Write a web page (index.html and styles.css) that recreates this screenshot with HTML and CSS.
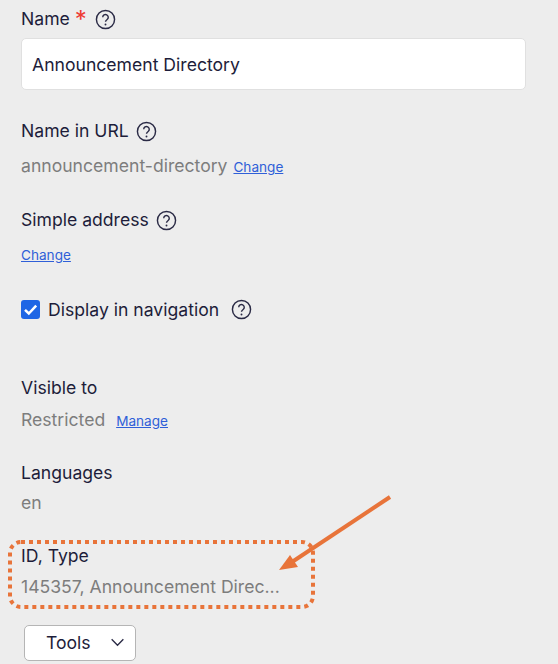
FILE: index.html
```html
<!DOCTYPE html>
<html lang="en">
<head>
    <meta charset="UTF-8" />
    <title>Page settings</title>
    <link rel="stylesheet" href="styles.css">
</head>
<body>

<div class="settings-form">
    <div class="field field-name">
        <div class="field-label">
            Name <span class="required">*</span>
            <svg class="help-icon" viewBox="0 0 22 22"><circle cx="11" cy="11" r="9.5"/><path d="M8.1 8.7a2.9 2.9 0 1 1 4.6 2.3c-1 .7-1.7 1.2-1.7 2.4"/><circle class="help-dot" cx="11" cy="16.2" r="1"/></svg>
        </div>
        <input class="text-input" type="text" value="Announcement Directory">
    </div>

    <div class="field field-url">
        <div class="field-label">
            Name in URL
            <svg class="help-icon" viewBox="0 0 22 22"><circle cx="11" cy="11" r="9.5"/><path d="M8.1 8.7a2.9 2.9 0 1 1 4.6 2.3c-1 .7-1.7 1.2-1.7 2.4"/><circle class="help-dot" cx="11" cy="16.2" r="1"/></svg>
        </div>
        <div class="field-value">announcement-directory <a class="small-link" href="#">Change</a></div>
    </div>

    <div class="field field-address">
        <div class="field-label">
            Simple address
            <svg class="help-icon" viewBox="0 0 22 22"><circle cx="11" cy="11" r="9.5"/><path d="M8.1 8.7a2.9 2.9 0 1 1 4.6 2.3c-1 .7-1.7 1.2-1.7 2.4"/><circle class="help-dot" cx="11" cy="16.2" r="1"/></svg>
        </div>
        <div class="field-value"><a class="small-link flush" href="#">Change</a></div>
    </div>

    <div class="check-row">
        <span class="checkbox">
            <svg viewBox="0 0 18 18"><path d="M3.8 9.3l3.6 3.5 7-7.4"/></svg>
        </span>
        <span class="check-label">Display in navigation</span>
        <svg class="help-icon" viewBox="0 0 22 22"><circle cx="11" cy="11" r="9.5"/><path d="M8.1 8.7a2.9 2.9 0 1 1 4.6 2.3c-1 .7-1.7 1.2-1.7 2.4"/><circle class="help-dot" cx="11" cy="16.2" r="1"/></svg>
    </div>

    <div class="field field-visible">
        <div class="field-label">Visible to</div>
        <div class="field-value">Restricted <a class="small-link wide" href="#">Manage</a></div>
    </div>

    <div class="field field-languages">
        <div class="field-label">Languages</div>
        <div class="field-value">en</div>
    </div>

    <div class="field field-id">
        <div class="field-label">ID, Type</div>
        <div class="field-value">145357, Announcement Direc...</div>
    </div>

    <button class="tools-button" type="button">
        Tools
        <svg viewBox="0 0 16 10"><path d="M1.5 1.5L8 8l6.5-6.5"/></svg>
    </button>
</div>

<!-- callout drawn on top of the screenshot -->
<svg class="callout" viewBox="0 0 558 664">
    <rect class="callout-box" x="10" y="542" width="303" height="65" rx="11"/>
    <path class="callout-line" d="M390 497L292 562"/>
    <path class="callout-head" d="M279 570L290 555L298 567Z"/>
</svg>

</body>
</html>
```

FILE: styles.css
```css
body {
    font-family: Inter, "Noto Sans", sans-serif;
    margin: 0;
    padding: 0;
    background: #ededed;
    color: #1d1d3a;
    width: 558px;
    height: 664px;
    overflow: hidden;
    position: relative;
}

.settings-form {
    padding: 8px 32px 0 21px;
}

.field-label {
    display: flex;
    align-items: center;
    gap: 7px;
    font-size: 17.6px;
    line-height: 22px;
    height: 22px;
}

.required {
    color: #ee3a33;
    font-size: 24px;
    line-height: 22px;
    margin-top: 2px;
    margin-left: -2px;
    margin-right: 1px;
}

.help-icon {
    width: 21px;
    height: 21px;
    fill: none;
    stroke: #2a2a45;
    stroke-width: 1.5;
}

.help-dot {
    fill: #2a2a45;
    stroke: none;
}

.text-input {
    display: block;
    box-sizing: border-box;
    width: 505px;
    height: 52px;
    margin-top: 8px;
    padding: 0 10px;
    border: 1px solid #e0e0e0;
    border-radius: 5px;
    background: #fff;
    font-family: inherit;
    font-size: 17.6px;
    color: #1d1d3a;
}

.field-value {
    font-size: 17.6px;
    line-height: 22px;
    color: #7d7d7d;
    margin-top: 13px;
}

.small-link {
    font-size: 13.6px;
    color: #2f5fd8;
    margin-left: 1px;
}

.small-link.flush {
    margin-left: 0;
}

.small-link.wide {
    margin-left: 6px;
}

.field-url {
    margin-top: 30px;
}

.field-address {
    margin-top: 31px;
}

.field-address .field-value {
    margin-top: 12px;
}

.check-row {
    display: flex;
    align-items: center;
    margin-top: 32px;
    height: 22px;
}

.checkbox {
    display: flex;
    width: 19px;
    height: 19px;
    border-radius: 3px;
    background: #1f66e5;
    margin-right: 8px;
}

.checkbox svg {
    width: 19px;
    height: 19px;
    fill: none;
    stroke: #fff;
    stroke-width: 2.4;
}

.check-label {
    font-size: 17.6px;
    margin-right: 12px;
}

.field-visible {
    margin-top: 57px;
}

.field-visible .field-value {
    margin-top: 10px;
}

.field-languages {
    margin-top: 30px;
}

.field-languages .field-value {
    margin-top: 8px;
}

.field-id {
    margin-top: 31px;
}

.field-id .field-value {
    margin-top: 9px;
}

.tools-button {
    display: flex;
    align-items: center;
    box-sizing: border-box;
    width: 112px;
    height: 36px;
    margin: 27px 0 0 3px;
    padding: 0 0 2px 21px;
    border: 1px solid #b5b5b5;
    border-radius: 5px;
    background: #fff;
    font-family: inherit;
    font-size: 17.6px;
    color: #1d1d3a;
}

.tools-button svg {
    width: 15px;
    height: 9px;
    margin-left: 19px;
    fill: none;
    stroke: #2a2a45;
    stroke-width: 1.5;
}

.callout {
    position: absolute;
    left: 0;
    top: 0;
    width: 558px;
    height: 664px;
    pointer-events: none;
}

.callout-box {
    fill: none;
    stroke: #e8743a;
    stroke-width: 4;
    stroke-dasharray: 4 4;
}

.callout-line {
    fill: none;
    stroke: #e8743a;
    stroke-width: 4;
}

.callout-head {
    fill: #e8743a;
}
```
